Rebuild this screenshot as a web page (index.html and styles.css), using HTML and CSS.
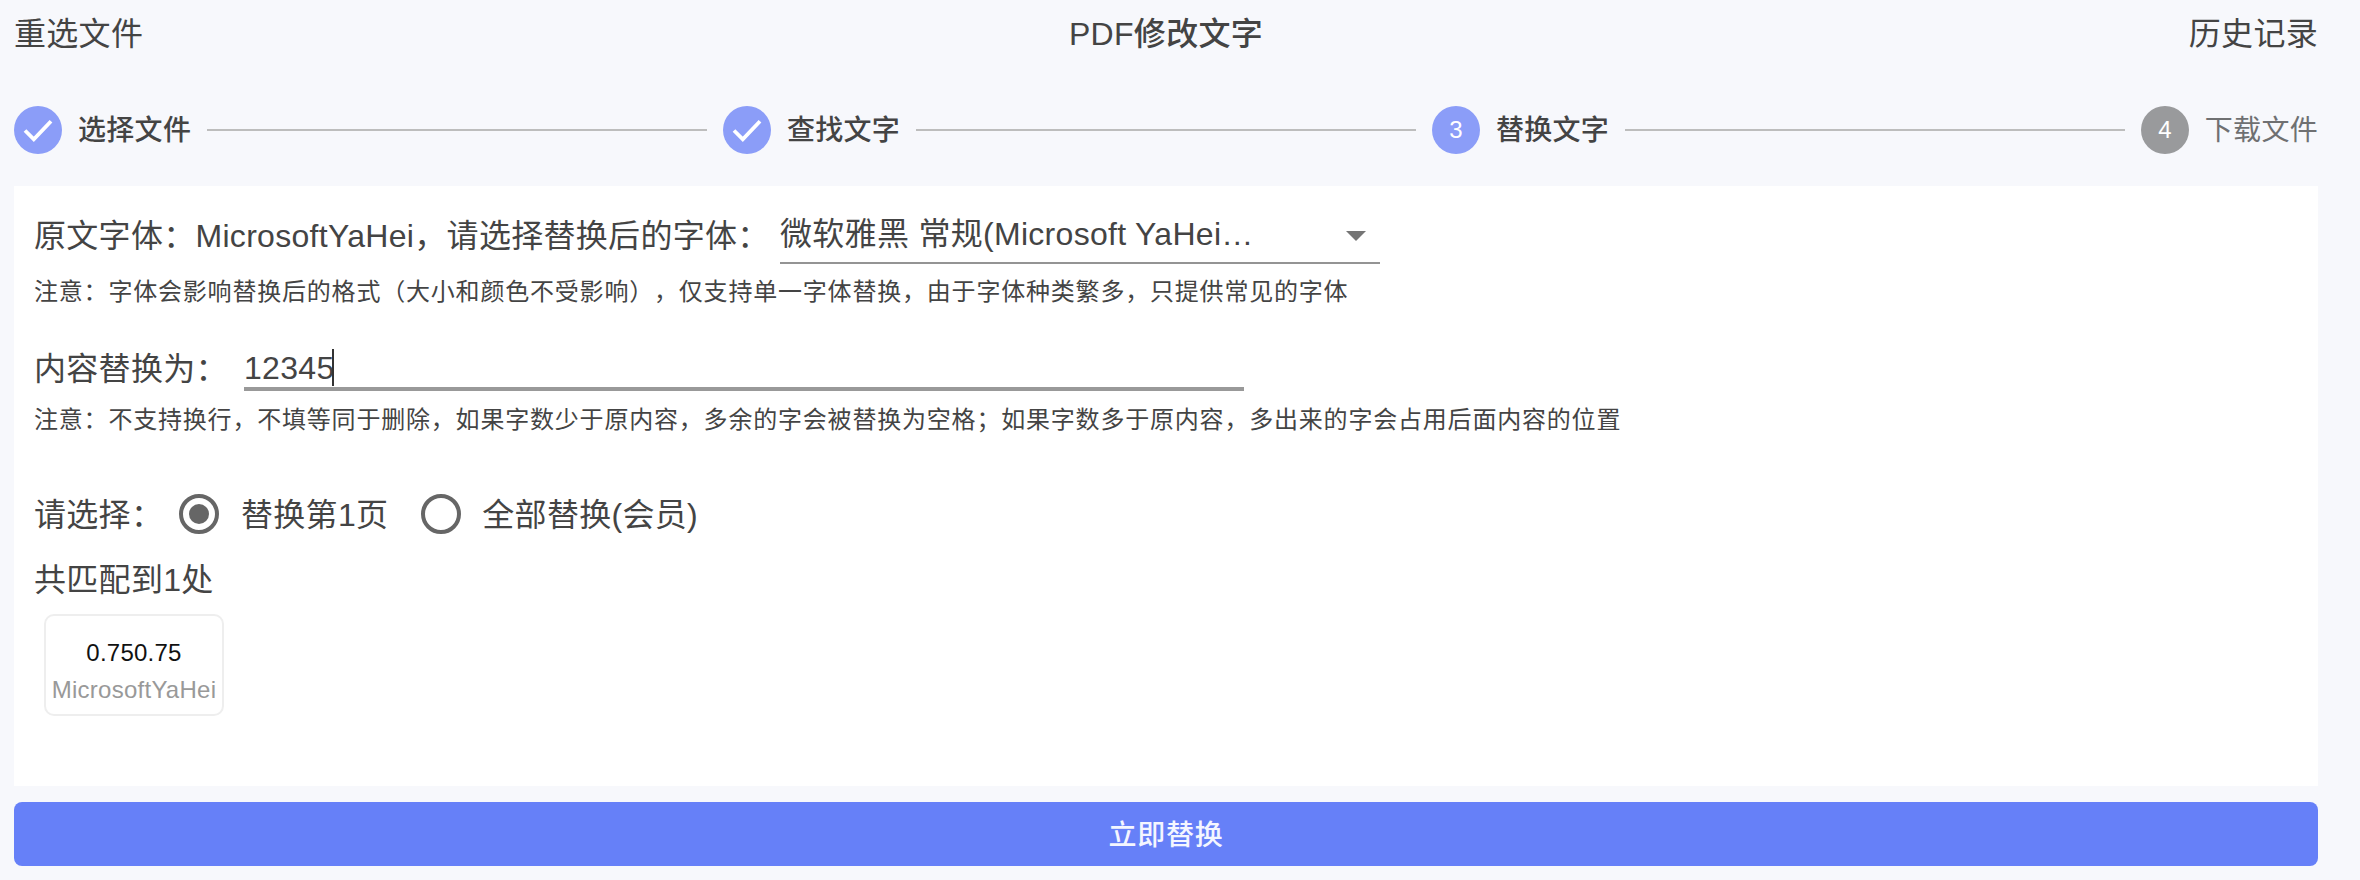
FILE: index.html
```html
<!DOCTYPE html>
<html lang="zh-CN">
<head>
<meta charset="utf-8">
<title>PDF修改文字</title>
<link rel="stylesheet" href="styles.css">
</head>
<body>
<div class="page">
  <header class="topbar">
    <span class="topbar-link">重选文件</span>
    <h1 class="topbar-title">PDF修改文字</h1>
    <span class="topbar-link">历史记录</span>
  </header>

  <div class="stepper">
    <div class="step">
      <span class="step-icon"><svg class="check" viewBox="0 0 48 48"><path d="M11 24.5l8.8 8.8L37 15.2"/></svg></span>
      <span class="step-label">选择文件</span>
    </div>
    <div class="connector"></div>
    <div class="step">
      <span class="step-icon"><svg class="check" viewBox="0 0 48 48"><path d="M11 24.5l8.8 8.8L37 15.2"/></svg></span>
      <span class="step-label">查找文字</span>
    </div>
    <div class="connector"></div>
    <div class="step">
      <span class="step-icon">3</span>
      <span class="step-label">替换文字</span>
    </div>
    <div class="connector"></div>
    <div class="step step-pending">
      <span class="step-icon">4</span>
      <span class="step-label">下载文件</span>
    </div>
  </div>

  <main class="panel">
    <div class="row row-font">
      <span class="font-label">原文字体：MicrosoftYaHei，请选择替换后的字体：</span>
      <div class="select">
        <span class="select-value">微软雅黑 常规(Microsoft YaHei…</span>
        <svg class="select-arrow" viewBox="0 0 20 10"><path d="M0 0h20L10 10z"/></svg>
      </div>
    </div>
    <p class="note">注意：字体会影响替换后的格式（大小和颜色不受影响），仅支持单一字体替换，由于字体种类繁多，只提供常见的字体</p>

    <div class="row row-content">
      <span class="content-label">内容替换为：</span>
      <div class="input"><span>12345</span><i class="caret"></i></div>
    </div>
    <p class="note note-content">注意：不支持换行，不填等同于删除，如果字数少于原内容，多余的字会被替换为空格；如果字数多于原内容，多出来的字会占用后面内容的位置</p>

    <div class="row row-scope">
      <span class="scope-label">请选择：</span>
      <span class="radio radio-on"></span>
      <span class="radio-label">替换第1页</span>
      <span class="radio"></span>
      <span class="radio-label">全部替换(会员)</span>
    </div>
    <p class="count">共匹配到1处</p>
    <div class="match">
      <span class="match-text">0.750.75</span>
      <span class="match-font">MicrosoftYaHei</span>
    </div>
  </main>

  <button class="submit">立即替换</button>
</div>
</body>
</html>
```

FILE: styles.css
```css
* { box-sizing: border-box; }

body {
  margin: 0;
  background: #f7f8fc;
  color: #444;
  font-family: "Liberation Sans", "Noto Sans CJK SC", sans-serif;
  font-size: 32px;
  letter-spacing: 0.3px;
  white-space: nowrap;
  text-spacing-trim: space-all;
}

p, h1 { margin: 0; }

.page {
  width: 2318px;
  height: 880px;
  padding-left: 14px;
  display: flex;
  flex-direction: column;
}

.topbar {
  height: 66px;
  padding-top: 2px;
  display: flex;
  align-items: center;
  justify-content: space-between;
  line-height: 48px;
}

.topbar-title {
  font-size: 32px;
  font-weight: 500;
}

.stepper {
  height: 48px;
  margin: 40px 0 32px;
  display: flex;
  align-items: center;
  gap: 16px;
}

.step {
  display: flex;
  align-items: center;
  gap: 16px;
}

.step-icon {
  width: 48px;
  height: 48px;
  border-radius: 50%;
  background: #8b9df8;
  color: #fff;
  font-size: 24px;
  letter-spacing: 0;
  display: flex;
  align-items: center;
  justify-content: center;
}

.check {
  width: 48px;
  height: 48px;
  fill: none;
  stroke: #fff;
  stroke-width: 3.8;
}

.step-label {
  padding-top: 2px;
  font-size: 28px;
  line-height: 40px;
  font-weight: 500;
}

.step-pending .step-icon { background: #999a9c; }

.step-pending .step-label {
  color: #6f7072;
  font-weight: 400;
}

.connector {
  flex: 1;
  height: 2px;
  background: #bdbdbd;
}

.panel {
  height: 600px;
  padding: 16px 20px;
  background: #fff;
}

.row {
  display: flex;
  align-items: center;
}

.row-font { height: 62px; }

.font-label { width: 746px; }

.select {
  width: 600px;
  height: 62px;
  padding-right: 14px;
  border-bottom: 2px solid #949494;
  display: flex;
  align-items: center;
  justify-content: space-between;
}

.select-value { padding-bottom: 3px; }

.select-arrow {
  width: 20px;
  height: 10px;
  margin-top: 8px;
  fill: #757575;
}

.note {
  height: 40px;
  margin-top: 7px;
  font-size: 24px;
  line-height: 41px;
  letter-spacing: 0.8px;
}

.row-content {
  height: 48px;
  margin-top: 32px;
}

.content-label { width: 210px; padding-bottom: 3px; }

.input {
  width: 1000px;
  height: 48px;
  padding-top: 6px;
  border-bottom: 4px solid #999;
  display: flex;
  align-items: center;
}

.caret {
  width: 2px;
  height: 37px;
  margin: 0 0 2px -2px;
  background: #333;
}

.note-content { margin-top: 8px; }

.row-scope {
  height: 84px;
  margin-top: 33px;
}

.scope-label { width: 145px; padding-bottom: 4px; }

.radio {
  width: 40px;
  height: 40px;
  border: 4px solid #666;
  border-radius: 50%;
  display: flex;
  align-items: center;
  justify-content: center;
}

.radio-on::after {
  content: "";
  width: 20px;
  height: 20px;
  border-radius: 50%;
  background: #666;
}

.radio-label { margin-left: 22px; padding-bottom: 4px; }
.radio-label + .radio { margin-left: 33px; }
.radio + .radio-label:last-child { margin-left: 21px; }

.count {
  height: 48px;
  line-height: 48px;
}

.match {
  width: 180px;
  height: 102px;
  margin: 10px 0 0 10px;
  padding-top: 18px;
  border: 2px solid #eee;
  border-radius: 10px;
  display: flex;
  flex-direction: column;
  align-items: center;
  font-size: 24px;
  line-height: 37px;
  letter-spacing: 0.25px;
}

.match-text { color: #111; }
.match-font { color: #999; }

.submit {
  height: 64px;
  margin-top: 16px;
  padding-bottom: 3px;
  border: 0;
  border-radius: 8px;
  background: #6680f8;
  color: #f4f6ff;
  font: 500 28px "Liberation Sans", "Noto Sans CJK SC", sans-serif;
  letter-spacing: 0.7px;
}
```
